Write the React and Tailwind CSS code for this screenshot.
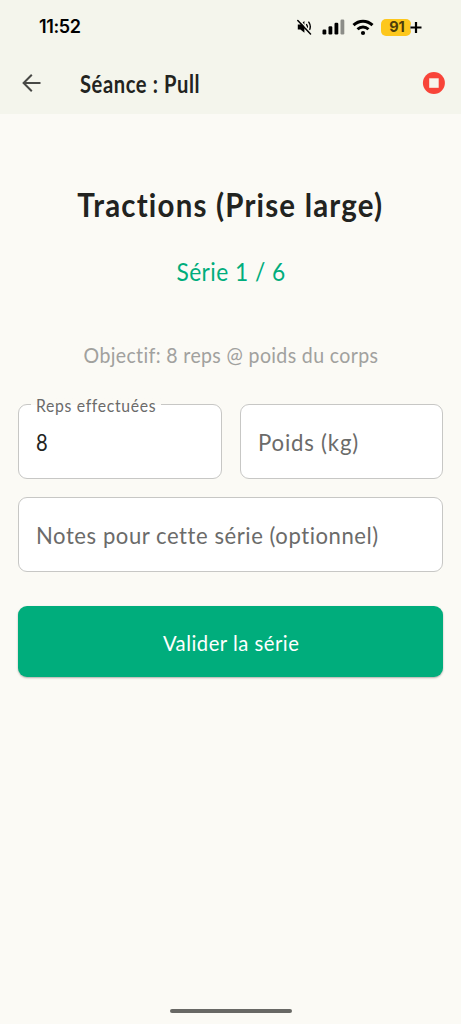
import React from "react";

function StatusBar() {
  return (
    <div className="flex h-[54px] items-center justify-between pl-[39px] pr-[39px] text-black">
      <span className="inline-block origin-left whitespace-nowrap font-['Inter',sans-serif] text-[18px] font-semibold leading-6 tracking-[-0.4px]">
        11:52
      </span>
      <div className="flex items-center">
        <svg className="mr-[10px] h-[16px] w-[15px]" viewBox="0 0 15 16">
          <path d="M.8 5.400h2.600L7.400 2v11.800L3.400 10.600H.8z" fill="currentColor" />
          <path d="M9.600 5.600q1.500 2.200 0 4.600M11.800 3.200q3 4.600 0 9.200" fill="none" stroke="currentColor" strokeWidth="1.400" strokeLinecap="round" />
          <path d="M1.800.6 14.400 14" stroke="#f4f5ec" strokeWidth="1.500" />
          <path d="M.8 1.500 13.500 15" stroke="currentColor" strokeWidth="1.500" strokeLinecap="round" />
        </svg>
        <svg className="mr-[7px] h-[16px] w-[23px]" viewBox="0 0 23 16">
          <rect x="0.500" y="10.500" width="3.800" height="5" rx="1.200" />
          <rect x="6.500" y="7.300" width="3.800" height="8.200" rx="1.200" />
          <rect x="12.500" y="3.800" width="3.800" height="11.700" rx="1.200" />
          <rect x="18.500" y="0.500" width="3.800" height="15" rx="1.200" fill="#8c8d88" />
        </svg>
        <svg className="mr-[7px] h-[17px] w-[22px]" viewBox="0 0 22 17" fill="none" stroke="currentColor">
          <path d="M1.500 6.200C7 .9 15 .9 20.500 6.200" strokeWidth="3" />
          <path d="M5.500 10.200c3.200-3 7.800-3 11 0" strokeWidth="2.900" />
          <circle cx="11" cy="14" r="2.100" fill="currentColor" stroke="none" />
        </svg>
        <div className="flex items-center">
          <span className="flex h-[17px] w-[30px] items-center justify-center rounded-[5px] bg-[#fdc71c] pl-0.5 font-['Inter',sans-serif] text-[14.500px] font-bold leading-none text-[#4d3d0b]">
            91
          </span>
          <svg className="-ml-px h-[13px] w-[12px]" viewBox="0 0 12 13">
            <path d="M0 2.500q2 4 0 8" fill="#c9cac3" />
            <path d="M.5 6.500h11M6 1v11" stroke="currentColor" strokeWidth="2.200" />
          </svg>
        </div>
      </div>
    </div>
  );
}

function AppBar() {
  return (
    <div className="flex h-[58px] items-center pl-[22px] pr-[16px]">
      <svg className="h-[20px] w-[20px]" viewBox="0 0 20 20" fill="none" stroke="#484946" strokeWidth="2">
        <path d="M18.500 10H2M9.800 1.800 1.600 10l8.200 8.200" />
      </svg>
      <h1 className="ml-[38px] flex-1 origin-left scale-x-[0.84] whitespace-nowrap pt-px text-[24px] font-bold leading-8 tracking-[0.700px] text-[#222320]">
        Séance : Pull
      </h1>
      <svg className="h-[23px] w-[23px]" viewBox="0 0 23 23">
        <circle cx="11.900" cy="11" r="11" fill="#f84439" />
        <rect x="7.200" y="6.300" width="9.500" height="9.500" fill="#f7f5ec" />
      </svg>
    </div>
  );
}

export default function App() {
  return (
    <div className="flex h-[1024px] w-full flex-col overflow-hidden bg-[#fbfaf5] font-['Lato',sans-serif]">
      <header className="h-[114px] bg-[#f4f5ec]">
        <StatusBar />
        <AppBar />
      </header>
      <main className="flex flex-1 flex-col px-[18px] pt-[71px]">
        <h2 className="flex h-10 justify-center text-[32px] font-bold leading-10 tracking-[1.300px] text-[#222320]">
          <span className="inline-block scale-x-[0.92] whitespace-nowrap">Tractions (Prise large)</span>
        </h2>
        <p className="mt-[30px] flex h-8 justify-center text-[25px] leading-8 tracking-[0.500px] text-[#00ad7c]">
          <span className="inline-block scale-x-[0.91] whitespace-nowrap">Série 1 / 6</span>
        </p>
        <p className="mt-[53px] flex h-[30px] justify-center text-[22px] leading-[30px] tracking-[0.400px] text-[#a1a19e]">
          <span className="inline-block scale-x-[0.888] whitespace-nowrap">Objectif: 8 reps @ poids du corps</span>
        </p>
        <div className="mt-[34px] flex gap-[18px]">
          <div className="relative flex h-[75px] flex-1 items-center rounded-[9px] border border-[#c7c7c5] bg-white pl-[17px]">
            <label className="absolute left-3 top-[-11px] h-[22px] w-[130px] bg-linear-to-b from-[#fbfaf5] from-50% to-white to-50% pl-[5px] text-[17.500px] leading-[24px] tracking-[0.750px] text-[#6b6b6a]">
              <span className="inline-block origin-left scale-x-[0.9] whitespace-nowrap">Reps effectuées</span>
            </label>
            <span className="inline-block origin-left scale-x-[0.84] pt-px text-[24px] leading-8 text-[#222320]">8</span>
          </div>
          <div className="flex h-[75px] flex-1 items-center rounded-[9px] border border-[#c7c7c5] bg-white pl-[17px] text-[24px] leading-8 tracking-[0.850px] text-[#6b6b6a]">
            <span className="inline-block origin-left scale-x-[0.925] whitespace-nowrap pt-px">Poids (kg)</span>
          </div>
        </div>
        <div className="mt-[18px] flex h-[75px] items-center rounded-[9px] border border-[#c7c7c5] bg-white pl-[17px] text-[24px] leading-8 tracking-[0.600px] text-[#6b6b6a]">
          <span className="inline-block origin-left scale-x-[0.92] whitespace-nowrap pt-px">Notes pour cette série (optionnel)</span>
        </div>
        <button className="mt-[34px] flex h-[71px] items-center justify-center rounded-[9px] bg-[#00ad7c] text-[22px] leading-8 tracking-[0.550px] text-white shadow-[0_1px_2px_rgba(0,0,0,0.3)]">
          <span className="inline-block scale-x-[0.92] whitespace-nowrap pl-px pt-0.5">Valider la série</span>
        </button>
      </main>
      <div className="mb-[11px] h-[4px] w-[122px] self-center rounded-full bg-[#686865]" />
    </div>
  );
}
